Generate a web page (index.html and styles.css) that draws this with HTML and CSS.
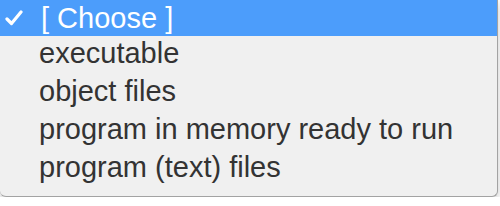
FILE: index.html
```html
<!DOCTYPE html>
<html lang="en">
<head>
    <meta charset="UTF-8">
    <title>Menu</title>
    <link rel="stylesheet" href="styles.css">
</head>
<body>
    <div class="menu">
        <div class="item selected">
            <svg class="check" width="18" height="16" viewBox="0 0 18 16">
                <path d="M2 9 L6.5 13.5 L16 2" fill="none" stroke="#fff" stroke-width="3.2" stroke-linecap="round" stroke-linejoin="round"/>
            </svg>
            [ Choose ]
        </div>
        <div class="lista">
            <div class="item">executable</div>
            <div class="item">object files</div>
            <div class="item">program in memory ready to run</div>
            <div class="item">program (text) files</div>
        </div>
    </div>
</body>
</html>
```

FILE: styles.css
```css
body {
    margin: 0;
    background: #ffffff;
    font-family: 'Liberation Sans', Arial, sans-serif;
}

.menu {
    width: 497px;
    height: 196px;
    background: #f0f0f0;
    border-right: 1px solid #a3a3a3;
    border-bottom: 1px solid #a3a3a3;
    border-radius: 0 0 6px 6px;
    box-shadow: 0 3px 9px rgba(0, 0, 0, 0.22);
    overflow: hidden;
}

.item {
    position: relative;
    padding-left: 39px;
    font-size: 29px;
    line-height: 38px;
    color: #333333;
    white-space: nowrap;
}

.selected {
    background: #4c9dfb;
    color: #ffffff;
    line-height: 35px;
    padding-top: 1px;
    padding-left: 41px;
}

.check {
    position: absolute;
    left: 5px;
    top: 10px;
}

.lista {
    margin-top: -2px;
}
```
